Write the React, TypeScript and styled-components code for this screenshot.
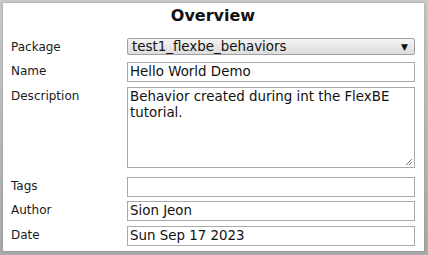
import styled, { createGlobalStyle } from "styled-components";

const GlobalStyle = createGlobalStyle`
    html, body {
        margin: 0;
        padding: 0;
        background: #ffffff;
    }
    body {
        font-family: "DejaVu Sans", "Liberation Sans", sans-serif;
        width: 428px;
        height: 255px;
        overflow: hidden;
    }
`

const Frame = styled.div`
    width: 428px;
    height: 255px;
    box-sizing: border-box;
    padding: 3px 4px 4px 3px;
    background: linear-gradient(#c8c8c8, #a9a9a9);
`

const Panel = styled.div`
    height: 100%;
    box-sizing: border-box;
    background: #ffffff;
    padding: 0 9px 0 8px;
    box-shadow: 0 0 2px rgba(0, 0, 0, 0.25);
`

const Title = styled.h2`
    margin: 0;
    padding-top: 3px;
    height: 28px;
    box-sizing: border-box;
    text-align: center;
    font-size: 16px;
    font-weight: bold;
    color: #111;
`

const Form = styled.div`
    display: grid;
    grid-template-columns: 116px 288px;
    row-gap: 5px;
    margin-top: 7px;
`

const Label = styled.div`
    font-size: 12px;
    color: #1a1a1a;
    line-height: 19px;
    align-self: start;
`

const Select = styled.div`
    height: 17px;
    box-sizing: border-box;
    border: 1px solid #a0a0a0;
    border-radius: 2px;
    background: linear-gradient(#f4f4f4, #dcdcdc);
    display: flex;
    align-items: center;
    justify-content: space-between;
    padding: 0 6px 0 4px;
    font-size: 13.4px;
    color: #111;
`

const Arrow = styled.span`
    font-size: 9px;
    color: #111;
`

const Field = styled.div<{ gapAfter?: number }>`
    height: 20px;
    box-sizing: border-box;
    border: 1px solid #a9a9a9;
    padding: 0 2px;
    font-size: 13.4px;
    line-height: 18px;
    color: #111;
    white-space: nowrap;
    margin-bottom: ${({ gapAfter }) => gapAfter ?? 0}px;
`

const Area = styled.div`
    position: relative;
    height: 81px;
    box-sizing: border-box;
    border: 1px solid #a9a9a9;
    padding: 1px 2px;
    font-size: 13.4px;
    line-height: 16px;
    color: #111;
    margin-bottom: 4px;
`

const Grip = styled.svg`
    position: absolute;
    right: 1px;
    bottom: 1px;
`

export default function App() {
    return (
        <>
            <GlobalStyle />
            <Frame>
                <Panel>
                    <Title>Overview</Title>
                    <Form>
                        <Label>Package</Label>
                        <Select>
                            <span>test1_flexbe_behaviors</span>
                            <Arrow>▼</Arrow>
                        </Select>
                        <Label>Name</Label>
                        <Field>Hello World Demo</Field>
                        <Label>Description</Label>
                        <Area>
                            Behavior created during int the FlexBE tutorial.
                            <Grip width="8" height="8" viewBox="0 0 8 8">
                                <path d="M1 7 L7 1 M4 7 L7 4" stroke="#777" strokeWidth="1" />
                            </Grip>
                        </Area>
                        <Label>Tags</Label>
                        <Field gapAfter={-1} />
                        <Label>Author</Label>
                        <Field>Sion Jeon</Field>
                        <Label>Date</Label>
                        <Field>Sun Sep 17 2023</Field>
                    </Form>
                </Panel>
            </Frame>
        </>
    );
}
